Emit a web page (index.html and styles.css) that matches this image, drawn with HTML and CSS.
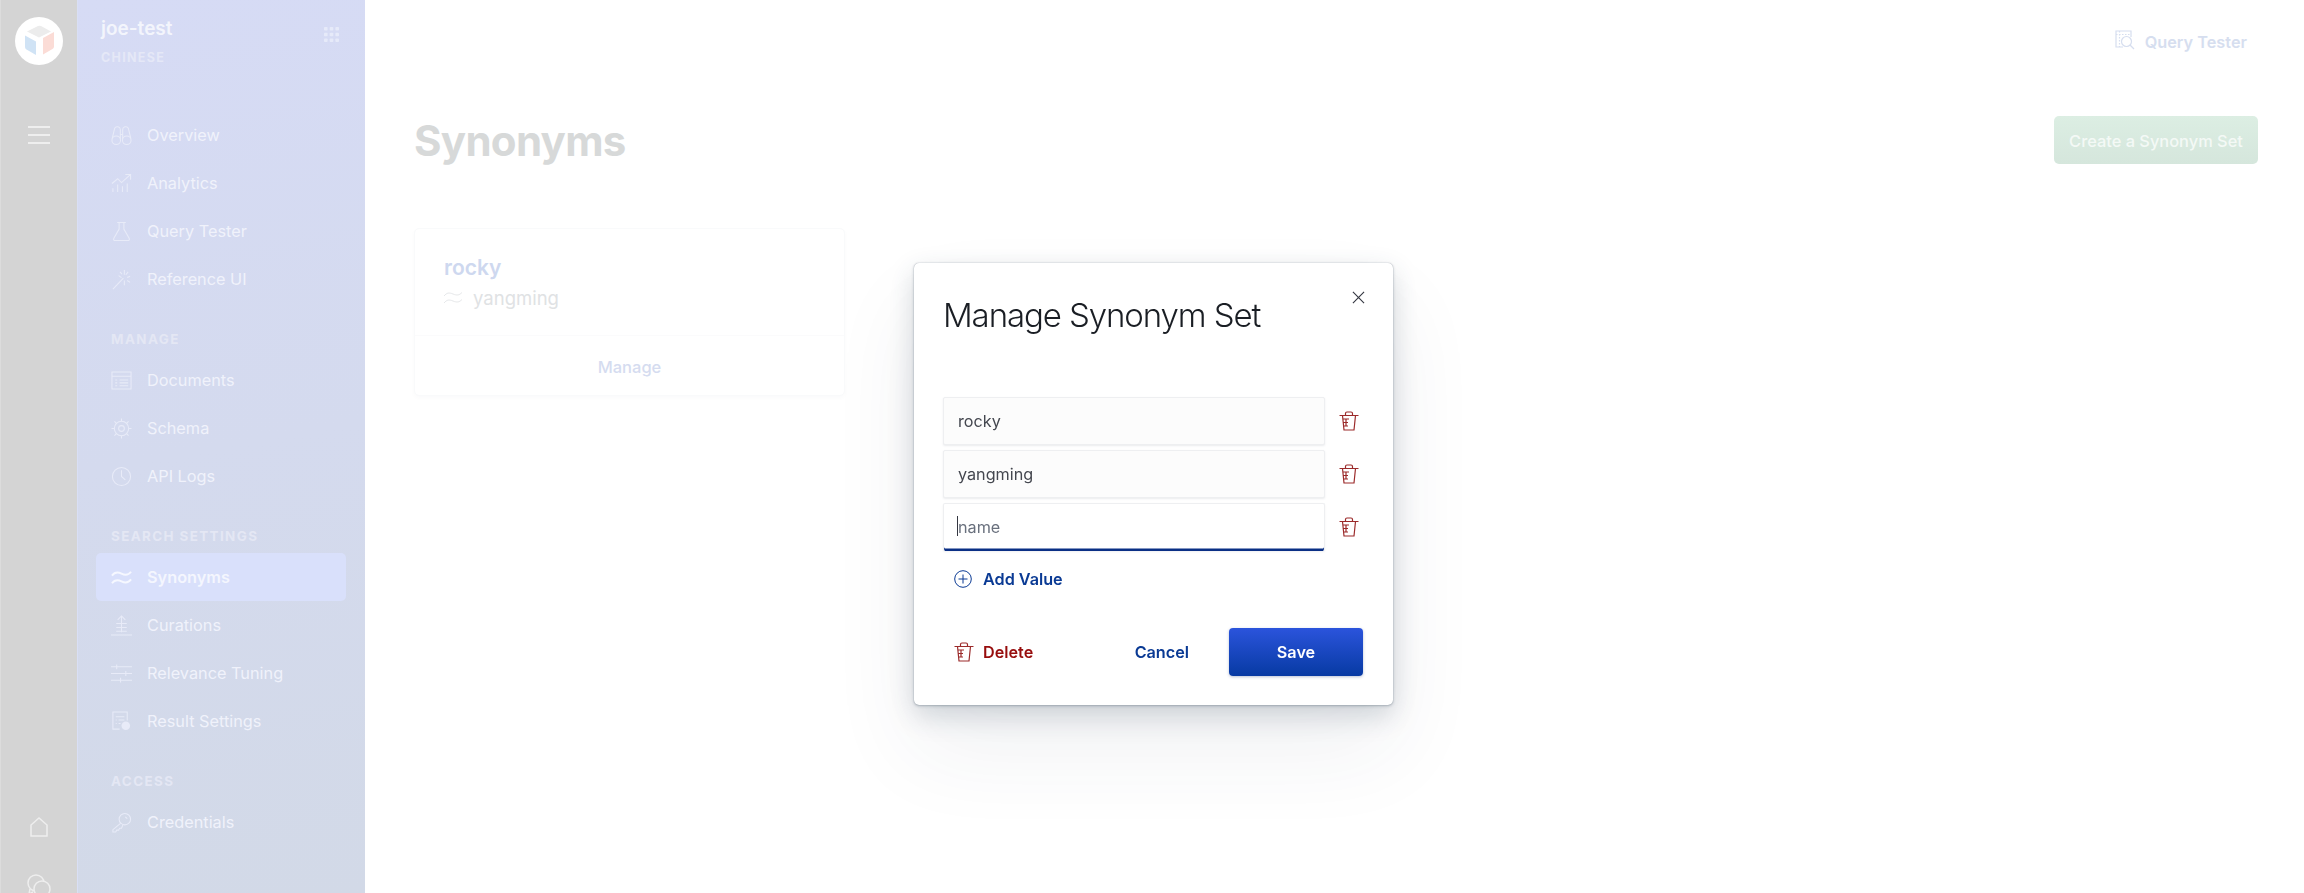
FILE: index.html
```html
<!DOCTYPE html>
<html lang="en">
<head>
  <meta charset="UTF-8" />
  <title>Synonyms</title>
  <link rel="stylesheet" href="styles.css">
</head>
<body>

  <nav class="rail">
    <div class="logo">
      <svg viewBox="0 0 33 32" width="33" height="32">
        <path d="M4 6.500 15 1q1.500-.7 3 0l10 5.500-12 6z" fill="#ececec"/>
        <path d="M2 10.500l11 6V30L3.500 24.500Q2 23.500 2 22z" fill="#d0e3f5"/>
        <path d="M20 13l11-6v14.500q0 1.500-1.500 2.500L20 29.500z" fill="#fbdcd6"/>
      </svg>
    </div>
    <button class="rail-btn menu-btn">
      <svg viewBox="0 0 22 18" width="22" height="18"><path d="M0 1h22M0 9h22M0 17h22"/></svg>
    </button>
    <div class="rail-bottom">
      <svg class="rail-icon" viewBox="0 0 18 20" width="18" height="20"><path d="M1 19V8l8-7 8 7v11z"/></svg>
      <svg class="rail-icon" viewBox="0 0 24 24" width="24" height="24"><circle cx="9" cy="9" r="8"/><circle cx="15" cy="15" r="8" fill="#d4d4d4"/><path d="M3 15l-1 5 4-2"/></svg>
    </div>
  </nav>

  <aside class="sidebar">
    <div class="engine">
      <div>
        <div class="engine-name">joe-test</div>
        <div class="engine-lang">CHINESE</div>
      </div>
      <svg class="grid-icon" viewBox="0 0 15 15" width="15" height="15">
        <rect x="0" y="0" width="3.600" height="3.600" rx=".8"/><rect x="5.700" y="0" width="3.600" height="3.600" rx=".8"/><rect x="11.400" y="0" width="3.600" height="3.600" rx=".8"/>
        <rect x="0" y="5.700" width="3.600" height="3.600" rx=".8"/><rect x="5.700" y="5.700" width="3.600" height="3.600" rx=".8"/><rect x="11.400" y="5.700" width="3.600" height="3.600" rx=".8"/>
        <rect x="0" y="11.400" width="3.600" height="3.600" rx=".8"/><rect x="5.700" y="11.400" width="3.600" height="3.600" rx=".8"/><rect x="11.400" y="11.400" width="3.600" height="3.600" rx=".8"/>
      </svg>
    </div>

    <ul class="nav-list first">
      <li class="nav-item">
        <svg viewBox="0 0 22 22"><circle cx="5.500" cy="16" r="4.500"/><circle cx="16.500" cy="16" r="4.500"/><path d="M9.800 15V5a3.200 3.200 0 00-6-1.500L1.300 14M12.200 15V5a3.200 3.200 0 016-1.500l2.500 10.500M9.800 10h2.400"/></svg>
        Overview
      </li>
      <li class="nav-item">
        <svg viewBox="0 0 22 22"><path d="M1 11l6-5 4 4 9-8M15 1.500h5.500V7M2 20v-4M7 20v-8M12 20v-6M17 20v-9"/></svg>
        Analytics
      </li>
      <li class="nav-item">
        <svg viewBox="0 0 22 22"><path d="M6.500 1.500h9M8.500 1.500v7L3 18q-1 2.500 1.500 2.500h13q2.500 0 1.500-2.500l-5.500-9.500v-7"/></svg>
        Query Tester
      </li>
      <li class="nav-item">
        <svg viewBox="0 0 22 22"><path d="M2 21 13 9.500M14 1v5M14 12v5M8 7l3 2M17 9l3-1.500M18 3l-2.500 3M9.500 3l2 2.500M17 12l3 2"/></svg>
        Reference UI
      </li>
    </ul>

    <h3 class="nav-head">MANAGE</h3>
    <ul class="nav-list">
      <li class="nav-item">
        <svg viewBox="0 0 22 22"><path d="M1 2h20v18H1zM1 6.500h20M4.500 10.500h2M9 10.500h9M4.500 13.500h2M9 13.500h9M4.500 16.500h2M9 16.500h9"/></svg>
        Documents
      </li>
      <li class="nav-item">
        <svg viewBox="0 0 22 22"><circle cx="11" cy="11" r="3"/><circle cx="11" cy="11" r="7.500"/><path d="M11 0.500v3M11 18.500v3M0.500 11h3M18.500 11h3M3.600 3.600l2.100 2.100M16.300 16.300l2.100 2.100M18.400 3.600l-2.100 2.100M5.700 16.300l-2.100 2.100"/></svg>
        Schema
      </li>
      <li class="nav-item">
        <svg viewBox="0 0 22 22"><circle cx="11" cy="11" r="9.500"/><path d="M11 4.500V11l4 3.500"/></svg>
        API Logs
      </li>
    </ul>

    <h3 class="nav-head">SEARCH SETTINGS</h3>
    <ul class="nav-list">
      <li class="nav-item active">
        <svg viewBox="0 0 22 22"><path d="M1 9c3-4 6-4 10-2s7 2 10-2M1 17c3-4 6-4 10-2s7 2 10-2"/></svg>
        Synonyms
      </li>
      <li class="nav-item">
        <svg viewBox="0 0 22 22"><path d="M0 21h22M11 1v17M7 5l4-4 4 4M5.500 9h11M5.500 13h11M5.500 17h11"/></svg>
        Curations
      </li>
      <li class="nav-item">
        <svg viewBox="0 0 22 22"><path d="M0 4h22M0 11h22M0 18h22M6 1.500v5M15.500 8.500v5M10 15.500v5"/></svg>
        Relevance Tuning
      </li>
      <li class="nav-item">
        <svg viewBox="0 0 22 22"><path d="M9 19H2V1h15v9M5 6h9M5 9.500h1M8 9.500h6M5 13h1M8 13h2"/><circle class="solid" cx="15.500" cy="15.500" r="4.500"/></svg>
        Result Settings
      </li>
    </ul>

    <h3 class="nav-head">ACCESS</h3>
    <ul class="nav-list">
      <li class="nav-item">
        <svg viewBox="0 0 22 22"><circle cx="14.500" cy="7.500" r="6"/><path d="M10 12l-8 6.500V21h3l1-2h2l1-2h2l1.500-3.500"/><path d="M15 5l2 2"/></svg>
        Credentials
      </li>
    </ul>
  </aside>

  <main class="content">
    <div class="topbar">
      <a class="tester-link">
        <svg viewBox="0 0 20 20" width="20" height="20"><path d="M8 17H1V1h15v6"/><path d="M1 4.500h15M4.500 1v16" stroke-dasharray="1.500 1.500"/><circle cx="11.500" cy="11.500" r="5"/><path d="M15 15l4 4"/></svg>
        Query Tester
      </a>
    </div>
    <div class="page-head">
      <h1>Synonyms</h1>
      <button class="create-btn">Create a Synonym Set</button>
    </div>
    <section class="card">
      <div class="card-body">
        <div class="card-title">rocky</div>
        <div class="card-syn">
          <svg viewBox="0 0 18 14" width="18" height="14"><path d="M0 5c3-3.500 5-3.500 9-2s6 1.500 9-1.500M0 12c3-3.500 5-3.500 9-2s6 1.500 9-1.500"/></svg>
          yangming
        </div>
      </div>
      <div class="card-foot">Manage</div>
    </section>
  </main>

  <div class="overlay">
    <div class="modal">
      <div class="modal-head">
        <h2>Manage Synonym Set</h2>
        <button class="close-btn">
          <svg viewBox="0 0 14 14" width="13" height="13"><path d="M1 1l12 12M13 1 1 13"/></svg>
        </button>
      </div>

      <div class="field-row">
        <input class="field" type="text" value="rocky">
        <button class="trash-btn"><svg class="trash" viewBox="0 0 20 20" width="20" height="20"><path d="M.5 4.500h19M6.500 4.500V2.500q0-1.500 1.500-1.500h4q1.500 0 1.500 1.500v2M3.500 4.500 5 19h10l1.500-14.500M3.900 8H10M7 8v7M4.500 11.500H9M5 15h4"/></svg></button>
      </div>
      <div class="field-row">
        <input class="field" type="text" value="yangming">
        <button class="trash-btn"><svg class="trash" viewBox="0 0 20 20" width="20" height="20"><path d="M.5 4.500h19M6.500 4.500V2.500q0-1.500 1.500-1.500h4q1.500 0 1.500 1.500v2M3.500 4.500 5 19h10l1.500-14.500M3.900 8H10M7 8v7M4.500 11.500H9M5 15h4"/></svg></button>
      </div>
      <div class="field-row">
        <div class="field-wrap">
          <input class="field focused" type="text" placeholder="name">
          <span class="caret"></span>
        </div>
        <button class="trash-btn"><svg class="trash" viewBox="0 0 20 20" width="20" height="20"><path d="M.5 4.500h19M6.500 4.500V2.500q0-1.500 1.500-1.500h4q1.500 0 1.500 1.500v2M3.500 4.500 5 19h10l1.500-14.500M3.900 8H10M7 8v7M4.500 11.500H9M5 15h4"/></svg></button>
      </div>

      <button class="add-btn">
        <svg viewBox="0 0 18 18" width="18" height="18"><circle cx="9" cy="9" r="8.300"/><path d="M9 4.500v9M4.500 9h9"/></svg>
        Add Value
      </button>

      <div class="modal-foot">
        <button class="delete-btn"><svg class="trash" viewBox="0 0 20 20" width="20" height="20"><path d="M.5 4.500h19M6.500 4.500V2.500q0-1.500 1.500-1.500h4q1.500 0 1.500 1.500v2M3.500 4.500 5 19h10l1.500-14.500M3.900 8H10M7 8v7M4.500 11.500H9M5 15h4"/></svg>Delete</button>
        <button class="cancel-btn">Cancel</button>
        <button class="save-btn">Save</button>
      </div>
    </div>
  </div>

</body>
</html>
```

FILE: styles.css
```css
* { margin: 0; padding: 0; box-sizing: border-box; }

html, body { height: 100%; overflow: hidden; }

body {
  display: flex;
  font-family: Inter, 'Noto Sans', sans-serif;
  background: #fff;
}

button {
  font-family: inherit;
  background: none;
  border: none;
  display: flex;
  align-items: center;
}

/* left rail */
.rail {
  width: 77px;
  flex-shrink: 0;
  background: #d4d4d4;
  border-left: 1px solid #dcdcdc;
  display: flex;
  flex-direction: column;
  align-items: center;
  padding-top: 17px;
}

.logo {
  width: 48px;
  height: 48px;
  border-radius: 50%;
  background: #fff;
  display: flex;
  align-items: center;
  justify-content: center;
}

.menu-btn { margin-top: 61px; }

.menu-btn path {
  fill: none;
  stroke: #eeeeee;
  stroke-width: 2;
}

.rail-icon {
  fill: none;
  stroke: #eeeeee;
  stroke-width: 1.500;
}

.rail-bottom {
  margin-top: auto;
  display: flex;
  flex-direction: column;
  align-items: center;
  gap: 37px;
  margin-bottom: -5px;
}

/* engine sidebar */
.sidebar {
  width: 288px;
  flex-shrink: 0;
  background: linear-gradient(170deg, #d6dbf5 0%, #d4daee 50%, #d2d9e7 100%);
  border-left: 1px solid #d9dff5;
  padding: 0 19px 0 18px;
  color: #eef0f9;
}

.engine {
  display: flex;
  justify-content: space-between;
  align-items: center;
  height: 76px;
  padding: 7px 7px 0 5px;
}

.engine-name {
  font-size: 19px;
  font-weight: 600;
  line-height: 24px;
  color: #f3f5fc;
}

.engine-lang {
  font-size: 12.500px;
  font-weight: 700;
  letter-spacing: 1.300px;
  line-height: 16px;
  margin-top: 9px;
  color: #e5e8f7;
}

.grid-icon { fill: #e6eaf9; margin-bottom: 14px; }

.nav-list { list-style: none; }
.nav-list.first { margin-top: 35px; }

.nav-item {
  height: 48px;
  display: flex;
  align-items: center;
  gap: 15px;
  padding-left: 15px;
  font-size: 16.300px;
  border-radius: 5px;
  color: #f0f2fb;
}

.nav-item svg {
  width: 21px;
  height: 21px;
  fill: none;
  stroke: #e8ebf8;
  stroke-width: 1.100;
  flex-shrink: 0;
}

.nav-item svg .solid { fill: #e8ebf8; stroke: none; }

.nav-item.active {
  background: #d9e0fb;
  font-weight: 600;
  color: #f4f6fe;
}

.nav-item.active svg { stroke: #f6f8ff; stroke-width: 2; }

.nav-head {
  font-size: 13.400px;
  font-weight: 700;
  letter-spacing: 1.400px;
  line-height: 16px;
  color: #e4e7f4;
  padding-left: 15px;
  margin: 28px 0 9px;
}

/* page behind the dialog */
.content {
  flex: 1;
  min-width: 0;
  padding: 0 46px 0 49px;
}

.topbar {
  height: 84px;
  display: flex;
  align-items: center;
  justify-content: flex-end;
  padding-right: 11px;
}

.tester-link {
  display: flex;
  align-items: center;
  gap: 10px;
  font-size: 16.300px;
  font-weight: 600;
  color: #d6deef;
}

.tester-link svg {
  fill: none;
  stroke: #d6deef;
  stroke-width: 1.200;
  margin-bottom: 4px;
}

.page-head {
  display: flex;
  justify-content: space-between;
  align-items: center;
  height: 48px;
  margin-top: 32px;
}

.page-head h1 {
  font-size: 42px;
  font-weight: 700;
  letter-spacing: -.7px;
  color: #d7d9d9;
}

.create-btn {
  width: 204px;
  height: 48px;
  padding-top: 2px;
  justify-content: center;
  border-radius: 5px;
  background: linear-gradient(#dceee3, #d5e6dc);
  color: #f4f9f6;
  font-size: 16.400px;
  font-weight: 500;
}

.card {
  width: 431px;
  height: 168px;
  margin-top: 64px;
  border: 1px solid #f9fafb;
  border-radius: 5px;
  box-shadow: 0 2px 5px rgba(30, 50, 80, .025);
  display: flex;
  flex-direction: column;
}

.card-body {
  flex: 1;
  padding: 26px 29px 0;
  border-bottom: 1px solid #fbfbfc;
}

.card-title {
  font-size: 21px;
  font-weight: 600;
  line-height: 26px;
  color: #ced8ef;
}

.card-syn {
  display: flex;
  align-items: center;
  gap: 11px;
  font-size: 18.500px;
  line-height: 26px;
  margin-top: 4px;
  color: #e0e2e4;
}

.card-syn svg { fill: none; stroke: #e6e8ea; stroke-width: 1; }

.card-foot {
  height: 59px;
  padding-top: 2px;
  display: flex;
  align-items: center;
  justify-content: center;
  font-size: 16.500px;
  font-weight: 500;
  color: #d5dcf0;
}

/* dialog */
.overlay {
  position: fixed;
  inset: 0;
  display: flex;
  justify-content: center;
  align-items: flex-start;
  padding: 263px 0 0 3px;
}

.modal {
  width: 479px;
  height: 442px;
  background: #fff;
  border-radius: 5px;
  padding: 0 30px 0 29px;
  box-shadow:
    0 0 1px rgba(40, 60, 80, .45),
    0 1px 3px rgba(40, 60, 80, .3),
    0 10px 28px rgba(40, 60, 80, .2),
    0 45px 90px rgba(40, 60, 80, .07);
}

.modal-head {
  height: 134px;
  display: flex;
  justify-content: space-between;
  align-items: flex-start;
}

.modal-head h2 {
  font-size: 33px;
  font-weight: 300;
  line-height: 40px;
  letter-spacing: -1.100px;
  color: #1a1e24;
  margin: 32px 0 0 0;
}

.close-btn { margin: 28px -2px 0 0; }

.close-btn path { stroke: #343741; stroke-width: 1.200; fill: none; }

.field-row {
  display: flex;
  align-items: center;
  gap: 14px;
  margin-bottom: 5px;
}

.field-wrap {
  position: relative;
  display: flex;
}

.field {
  width: 382px;
  height: 48px;
  padding: 0 14px;
  border: 1px solid #eeeff1;
  border-radius: 2px;
  background: #fcfcfc;
  font-family: inherit;
  font-size: 16.200px;
  color: #44474f;
  outline: none;
  box-shadow: 0 1px 2px rgba(60, 70, 90, .1);
}

.field.focused {
  background: #fff;
  border-bottom: 0;
  padding-bottom: 2px;
  box-shadow: inset 0 -2.500px 0 #0a2f85, 0 1px 2px rgba(60, 70, 90, .08);
}

.field::placeholder { color: #69707d; opacity: 1; }

.caret {
  position: absolute;
  left: 14px;
  top: 13px;
  width: 1px;
  height: 20px;
  background: #343741;
}

.trash { fill: none; stroke: #9b2a2a; stroke-width: 1.200; }

.add-btn {
  gap: 11px;
  margin: 10px 0 0 11px;
  height: 36px;
  font-size: 16.200px;
  font-weight: 600;
  color: #0a3a94;
}

.add-btn svg { fill: none; stroke: #0a3a94; stroke-width: 1; }

.modal-foot {
  display: flex;
  align-items: center;
  margin-top: 31px;
}

.delete-btn {
  gap: 9px;
  margin-left: 11px;
  font-size: 16.200px;
  font-weight: 600;
  color: #970d0d;
}

.cancel-btn {
  margin-left: auto;
  font-size: 16.200px;
  font-weight: 600;
  color: #0a3a94;
}

.save-btn {
  width: 134px;
  height: 48px;
  justify-content: center;
  margin-left: 40px;
  border-radius: 4px;
  background: linear-gradient(#2b54dc, #073aa3);
  color: #fff;
  font-size: 16.200px;
  font-weight: 600;
  box-shadow: 0 1px 3px rgba(20, 50, 120, .3);
}
```
